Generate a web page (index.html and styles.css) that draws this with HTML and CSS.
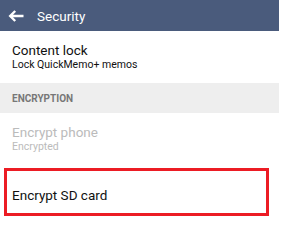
FILE: index.html
```html
<!DOCTYPE html>
<html lang="en">
<head>
  <meta charset="UTF-8" />
  <title>Security</title>
  <link rel="stylesheet" href="styles.css">
</head>
<body>
  <div class="screen">
    <div class="topbar">
      <svg class="back" width="16" height="12" viewBox="0 0 16 12">
        <path d="M15.5 6H2.5M7.2 1L2.2 6l5 5" fill="none" stroke="#fff" stroke-width="2.4" />
      </svg>
      <span class="title">Security</span>
    </div>

    <div class="item">
      <div class="item-title">Content lock</div>
      <div class="item-sub">Lock QuickMemo+ memos</div>
    </div>

    <div class="group">ENCRYPTION</div>

    <div class="item disabled">
      <div class="item-title">Encrypt phone</div>
      <div class="item-sub">Encrypted</div>
    </div>

    <div class="item single">
      <div class="item-title">Encrypt SD card</div>
      <div class="highlight"></div>
    </div>
  </div>
</body>
</html>
```

FILE: styles.css
```css
* {
  box-sizing: border-box;
}

body {
  margin: 0;
  font-family: Roboto, sans-serif;
  background: #fff;
  color: #111;
}

.screen {
  width: 279px;
}

.topbar {
  height: 31px;
  background: #4a5b7c;
  display: flex;
  align-items: center;
  padding-left: 8px;
  color: #fff;
}

.back {
  margin-right: 13px;
}

.title {
  font-size: 13.5px;
}

.item {
  position: relative;
  padding: 11px 12px 0 12px;
  height: 52px;
}

.item-title {
  font-size: 13.5px;
  line-height: 16px;
}

.item-sub {
  font-size: 10.5px;
  line-height: 14px;
}

.group {
  height: 30px;
  background: #eeeeee;
  padding-left: 12px;
  font-size: 10px;
  font-weight: bold;
  color: #777;
  display: flex;
  align-items: center;
}

.disabled {
  color: #bbb;
}

.single {
  padding-top: 22px;
}

.highlight {
  position: absolute;
  left: 4px;
  top: 3px;
  width: 265px;
  height: 48px;
  border: 3px solid #ec1c24;
}
```
